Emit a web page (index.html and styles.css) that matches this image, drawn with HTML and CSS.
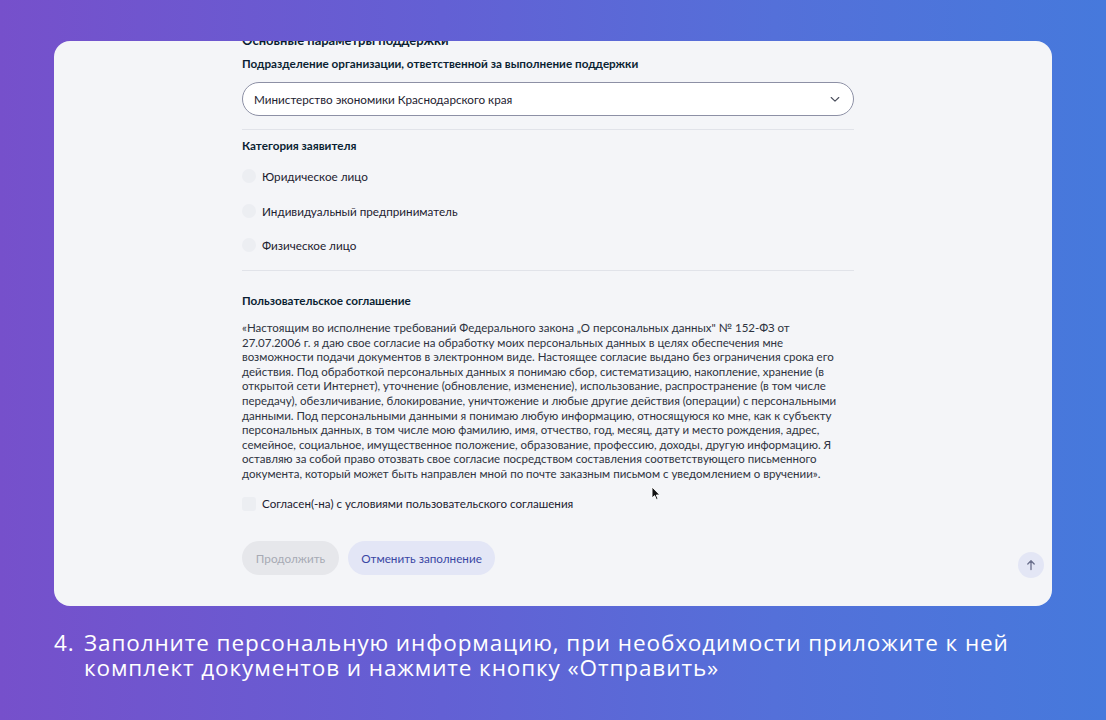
FILE: index.html
```html
<!DOCTYPE html>
<html lang="ru">
<head>
<meta charset="utf-8">
<title>Форма</title>
<link rel="stylesheet" href="styles.css">
</head>
<body>
<div class="stage">
  <div class="card">
    <div class="form">
      <div class="section-title">Основные параметры поддержки</div>
      <div class="label">Подразделение организации, ответственной за выполнение поддержки</div>
      <div class="select">
        <span>Министерство экономики Краснодарского края</span>
        <svg class="chev" width="10" height="7" viewBox="0 0 10 7"><path d="M1.2 1.5 L5 5.2 L8.8 1.5" fill="none" stroke="#4a4e5c" stroke-width="1.1" stroke-linecap="round" stroke-linejoin="round"/></svg>
      </div>
      <div class="divider"></div>
      <div class="label label-cat">Категория заявителя</div>
      <div class="radios">
        <div class="radio"><span class="dot"></span><span>Юридическое лицо</span></div>
        <div class="radio"><span class="dot"></span><span>Индивидуальный предприниматель</span></div>
        <div class="radio"><span class="dot"></span><span>Физическое лицо</span></div>
      </div>
      <div class="divider divider-2"></div>
      <div class="label label-agr">Пользовательское соглашение</div>
      <p class="agreement">«Настоящим во исполнение требований Федерального закона „О персональных данных" № 152-ФЗ от<br>27.07.2006 г. я даю свое согласие на обработку моих персональных данных в целях обеспечения мне<br>возможности подачи документов в электронном виде. Настоящее согласие выдано без ограничения срока его<br>действия. Под обработкой персональных данных я понимаю сбор, систематизацию, накопление, хранение (в<br>открытой сети Интернет), уточнение (обновление, изменение), использование, распространение (в том числе<br>передачу), обезличивание, блокирование, уничтожение и любые другие действия (операции) с персональными<br>данными. Под персональными данными я понимаю любую информацию, относящуюся ко мне, как к субъекту<br>персональных данных, в том числе мою фамилию, имя, отчество, год, месяц, дату и место рождения, адрес,<br>семейное, социальное, имущественное положение, образование, профессию, доходы, другую информацию. Я<br>оставляю за собой право отозвать свое согласие посредством составления соответствующего письменного<br>документа, который может быть направлен мной по почте заказным письмом с уведомлением о вручении».</p>
      <div class="check"><span class="box"></span><span>Согласен(-на) с условиями пользовательского соглашения</span></div>
      <div class="buttons">
        <button class="btn btn-disabled">Продолжить</button>
        <button class="btn btn-secondary">Отменить заполнение</button>
      </div>
    </div>
    <div class="to-top">
      <svg width="12" height="12" viewBox="0 0 12 12"><path d="M6 10.5 V2 M2.8 5 L6 1.8 L9.2 5" fill="none" stroke="#6a6f8c" stroke-width="1.3" stroke-linecap="round" stroke-linejoin="round"/></svg>
    </div>
    <svg class="cursor" width="10" height="15" viewBox="0 0 10 15"><path d="M1 1 L1 12 L3.6 9.6 L5.4 13.6 L7 12.9 L5.3 9 L8.8 9 Z" fill="#111" stroke="#fff" stroke-width="0.9" stroke-linejoin="round"/></svg>
  </div>
  <div class="caption">
    <span class="num">4.</span>
    <span class="ctext">Заполните персональную информацию, при необходимости приложите к ней<br>комплект документов и нажмите кнопку «Отправить»</span>
  </div>
</div>
</body>
</html>
```
FILE: styles.css
```css
html, body {
  margin: 0;
  padding: 0;
}
body {
  width: 1106px;
  height: 720px;
  overflow: hidden;
  background: linear-gradient(90deg, #7650cb 0%, #6360d4 40%, #5470d9 70%, #4679dc 100%);
  font-family: Lato, "Open Sans", sans-serif;
}
.stage {
  padding: 41px 54px 0 54px;
}
.card {
  position: relative;
  height: 565px;
  border-radius: 16px;
  background: #f4f5f8;
  overflow: hidden;
}
.form {
  width: 612px;
  margin-left: 188px;
  margin-top: -9px;
  color: #0b1f33;
}
.section-title {
  font-size: 13px;
  font-weight: 700;
  line-height: 16px;
}
.label {
  font-size: 11.7px;
  font-weight: 700;
  line-height: 16px;
  margin-top: 7px;
}
.select {
  margin-top: 11px;
  height: 34px;
  box-sizing: border-box;
  border: 1px solid #8d90a5;
  border-radius: 17px;
  background: #ffffff;
  display: flex;
  align-items: center;
  justify-content: space-between;
  padding: 0 13px 0 11px;
  font-size: 11.7px;
  color: #1c2130;
}
.chev {
  display: block;
}
.divider {
  height: 1px;
  background: #e1e3e9;
  margin-top: 13px;
}
.label-cat {
  margin-top: 7px;
}
.radios {
  margin-top: 13px;
  display: flex;
  flex-direction: column;
  gap: 14.5px;
}
.radio {
  display: flex;
  align-items: center;
  gap: 6px;
  height: 20px;
  font-size: 11.7px;
  color: #1c2130;
}
.dot {
  width: 14px;
  height: 14px;
  border-radius: 50%;
  background: #eceef2;
  flex: none;
}
.divider-2 {
  margin-top: 15px;
}
.label-agr {
  margin-top: 21px;
}
.agreement {
  margin: 13px 0 0 0;
  font-size: 11.5px;
  line-height: 14.6px;
  color: #2e3340;
  white-space: nowrap;
}
.check {
  margin-top: 12px;
  display: flex;
  align-items: center;
  gap: 6px;
  height: 20px;
  font-size: 11.6px;
  color: #1c2130;
}
.box {
  width: 14px;
  height: 14px;
  border-radius: 3px;
  background: #eceef2;
  flex: none;
}
.buttons {
  margin-top: 27px;
  display: flex;
  gap: 9px;
}
.btn {
  height: 34px;
  border: none;
  border-radius: 17px;
  padding: 0;
  font-family: Lato, "Open Sans", sans-serif;
  font-size: 11.7px;
}
.btn-disabled {
  background: #e6e7eb;
  color: #a7aab4;
  width: 97px;
}
.btn-secondary {
  background: #e3e6f6;
  color: #3a46a4;
  width: 147px;
}
.to-top {
  position: absolute;
  left: 964px;
  top: 511px;
  width: 26px;
  height: 26px;
  border-radius: 50%;
  background: #e3e6f5;
  display: flex;
  align-items: center;
  justify-content: center;
}
.to-top svg {
  display: block;
}
.cursor {
  position: absolute;
  left: 597px;
  top: 445px;
}
.caption {
  margin-top: 24px;
  display: flex;
  color: #ffffff;
  font-family: "Open Sans", sans-serif;
  font-size: 22.5px;
  line-height: 25px;
  letter-spacing: 0.9px;
}
.num {
  width: 30px;
  flex: none;
}
.ctext {
  white-space: nowrap;
}
```
